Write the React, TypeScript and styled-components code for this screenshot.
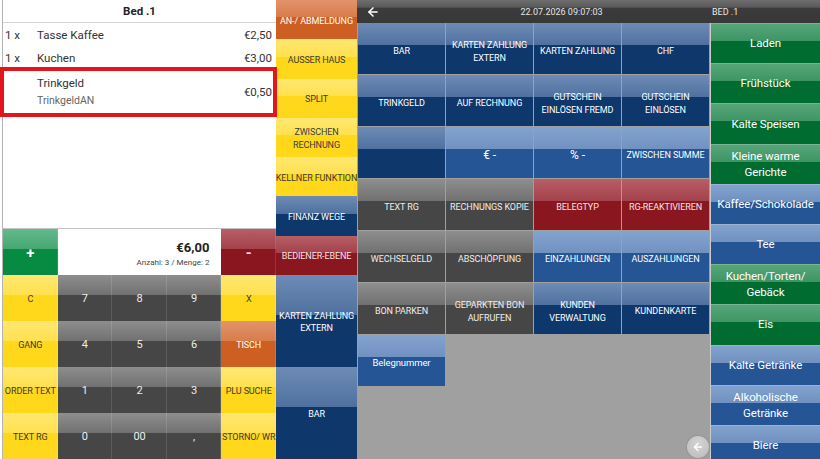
import styled, { createGlobalStyle, css } from "styled-components";
import { ArrowLeft } from "lucide-react";

const GlobalStyle = createGlobalStyle`
  html, body {
    margin: 0;
    padding: 0;
    background: #ffffff;
  }
  body {
    font-family: Roboto, "Noto Sans", "Liberation Sans", sans-serif;
  }
`;

type Tone =
  | "yellow"
  | "gray"
  | "green"
  | "red"
  | "orange"
  | "navy"
  | "blue"
  | "forest";

const tones: Record<Tone, { top: string; mid: string; low: string; ink: string }> = {
  yellow: { top: "#ffe872", mid: "#ffe04e", low: "#ffd81c", ink: "#3a3a3a" },
  gray: { top: "#8e8e8e", mid: "#707070", low: "#464646", ink: "#eeeeee" },
  green: { top: "#63b98c", mid: "#45a772", low: "#078b43", ink: "#ffffff" },
  red: { top: "#b75e67", mid: "#a3414b", low: "#8a1620", ink: "#f6e4e4" },
  orange: { top: "#e2936b", mid: "#d87c4b", low: "#cd5f22", ink: "#ffffff" },
  navy: { top: "#6d8bb5", mid: "#4f709f", low: "#0e376b", ink: "#ffffff" },
  blue: { top: "#84a3ce", mid: "#7091c1", low: "#255594", ink: "#ffffff" },
  forest: { top: "#58a67a", mid: "#3e9564", low: "#006c30", ink: "#ffffff" },
};

const gloss = (tone: Tone) => {
  const t = tones[tone];
  return css`
    background: linear-gradient(
      to bottom,
      ${t.top} 0%,
      ${t.mid} 44%,
      ${t.low} 44%,
      ${t.low} 100%
    );
    color: ${t.ink};
  `;
};

const Tile = styled.button<{ $tone: Tone; $size?: number; $bold?: boolean; $caps?: boolean }>`
  ${({ $tone }) => gloss($tone)}
  border: none;
  margin: 0;
  padding: 2px 0 0;
  min-width: 0;
  min-height: 0;
  display: flex;
  align-items: center;
  justify-content: center;
  text-align: center;
  font-family: inherit;
  font-size: ${({ $size }) => $size ?? 9}px;
  font-weight: ${({ $bold }) => ($bold ? 700 : 400)};
  text-transform: ${({ $caps }) => ($caps === false ? "none" : "uppercase")};
  letter-spacing: -0.1px;
  line-height: 1.35;
  white-space: pre;
  overflow: hidden;
  cursor: pointer;
`;

const Screen = styled.div`
  display: grid;
  grid-template-columns: 276px 81px 463px;
  grid-template-rows: 459px;
  width: 820px;
  height: 459px;
  overflow: hidden;
  background: #ffffff;
`;

/* ---------- left: bill + keypad ---------- */

const LeftPane = styled.div`
  display: flex;
  flex-direction: column;
  margin-left: 2px;
  border-left: 1px solid #b4b4b4;
  min-width: 0;
  min-height: 0;
`;

const Bill = styled.div`
  flex: 1;
  display: flex;
  flex-direction: column;
  background: #ffffff;
  border-bottom: 1px solid #c4c4c4;
  color: #333333;
  font-size: 11.5px;
`;

const BillHeader = styled.div`
  height: 22px;
  border-bottom: 1px solid #d6d6d6;
  display: flex;
  align-items: center;
  justify-content: center;
  font-weight: 700;
  color: #222222;
`;

const BillRow = styled.div<{ $active?: boolean }>`
  display: grid;
  grid-template-columns: 32px 1fr auto;
  align-items: center;
  height: 23px;
  padding: 0 4px 0 2px;

  ${({ $active }) =>
    $active &&
    css`
      position: relative;
      z-index: 1;
      height: auto;
      margin: -2px -1px 0 -3px;
      padding: 4px 1px 4px 1px;
      border: 4px solid #e3161c;
    `}
`;

const ItemName = styled.div`
  display: flex;
  flex-direction: column;
  line-height: 17px;
`;

const ItemNote = styled.span`
  font-size: 10.5px;
  color: #666666;
`;

const Keypad = styled.div`
  flex: 0 0 230px;
  display: grid;
  grid-template-columns: repeat(5, 1fr);
  grid-template-rows: repeat(5, 46px);

  & > ${Tile} {
    box-shadow: inset -1px 0 0 rgba(255, 255, 255, 0.12);
  }
`;

const Readout = styled.div`
  grid-column: span 3;
  background: #ffffff;
  display: flex;
  flex-direction: column;
  align-items: flex-end;
  justify-content: center;
  padding: 4px 12px 0 0;
  color: #222222;
`;

const Total = styled.div`
  font-size: 13px;
  font-weight: 700;
  line-height: 18px;
`;

const Counter = styled.div`
  font-size: 8px;
  color: #444444;
  line-height: 12px;
`;

/* ---------- middle: function column ---------- */

const FunctionColumn = styled.div`
  display: grid;
  grid-template-rows: repeat(7, 39.3px) repeat(2, 1fr);
  min-height: 0;
`;

/* ---------- right: payment grid + categories ---------- */

const RightPane = styled.div`
  display: flex;
  flex-direction: column;
  min-width: 0;
  min-height: 0;
  overflow: hidden;
`;

const TopBar = styled.div`
  flex: 0 0 23px;
  display: flex;
  align-items: center;
  background: linear-gradient(to bottom, #6e6e6e 0%, #585858 32%, #3b3b3b 34%, #383838 100%);
  color: #e6e6e6;
  font-size: 9px;
`;

const BackSlot = styled.div`
  width: 50px;
  padding-left: 9px;
  box-sizing: border-box;
  display: flex;
  align-items: center;
  color: #ffffff;
`;

const Clock = styled.div`
  flex: 1;
  text-align: center;
  padding-left: 6px;
`;

const TableName = styled.div`
  width: 108px;
  padding-left: 2px;
`;

const Body = styled.div`
  flex: 1;
  display: grid;
  grid-template-columns: 353px 1fr;
  grid-template-rows: minmax(0, 1fr);
  min-height: 0;
`;

const PayGrid = styled.div`
  position: relative;
  background: #a0a0a0;
  padding-left: 1px;
  display: grid;
  grid-template-columns: repeat(4, 87px);
  grid-auto-rows: 51px;
  gap: 1px;
  align-content: start;

  & > ${Tile} {
    padding-top: 6px;
  }
`;

const RoundBack = styled.button`
  position: absolute;
  right: 1px;
  bottom: 1px;
  width: 22px;
  height: 22px;
  border-radius: 50%;
  border: none;
  padding: 0;
  display: flex;
  align-items: center;
  justify-content: center;
  background: radial-gradient(circle at 50% 35%, #d4d4d4 0%, #c2c2c2 70%, #b4b4b4 100%);
  color: #ffffff;
  box-shadow: 0 0 2px rgba(0, 0, 0, 0.25);
`;

const Categories = styled.div`
  display: flex;
  flex-direction: column;
  overflow: hidden;
  min-height: 0;
  border-left: 1px solid #cacaca;

  & > ${Tile} {
    flex: 0 0 40.2px;
    line-height: 1.38;
    box-shadow: inset 0 1px 0 rgba(255, 255, 255, 0.18);
  }
`;

type Key = { label: string; tone: Tone; size?: number; bold?: boolean };

const keypadRows: Key[][] = [
  [{ label: "C", tone: "yellow" }, { label: "7", tone: "gray", size: 11 }, { label: "8", tone: "gray", size: 11 }, { label: "9", tone: "gray", size: 11 }, { label: "X", tone: "yellow" }],
  [{ label: "GANG", tone: "yellow" }, { label: "4", tone: "gray", size: 11 }, { label: "5", tone: "gray", size: 11 }, { label: "6", tone: "gray", size: 11 }, { label: "TISCH", tone: "orange" }],
  [{ label: "ORDER TEXT", tone: "yellow" }, { label: "1", tone: "gray", size: 11 }, { label: "2", tone: "gray", size: 11 }, { label: "3", tone: "gray", size: 11 }, { label: "PLU SUCHE", tone: "yellow" }],
  [{ label: "TEXT RG", tone: "yellow" }, { label: "0", tone: "gray", size: 11 }, { label: "00", tone: "gray", size: 11 }, { label: ",", tone: "gray", size: 11 }, { label: "STORNO/ WR", tone: "yellow" }],
];

const functions: Key[] = [
  { label: "AN-/ ABMELDUNG", tone: "orange" },
  { label: "AUSSER HAUS", tone: "yellow" },
  { label: "SPLIT", tone: "yellow" },
  { label: "ZWISCHEN\nRECHNUNG", tone: "yellow" },
  { label: "KELLNER FUNKTION", tone: "yellow" },
  { label: "FINANZ WEGE", tone: "navy" },
  { label: "BEDIENER-EBENE", tone: "red" },
  { label: "KARTEN ZAHLUNG\nEXTERN", tone: "navy" },
  { label: "BAR", tone: "navy" },
];

const payments: Key[] = [
  { label: "BAR", tone: "navy" },
  { label: "KARTEN ZAHLUNG\nEXTERN", tone: "navy" },
  { label: "KARTEN ZAHLUNG", tone: "navy" },
  { label: "CHF", tone: "navy" },
  { label: "TRINKGELD", tone: "navy" },
  { label: "AUF RECHNUNG", tone: "navy" },
  { label: "GUTSCHEIN\nEINLÖSEN FREMD", tone: "navy" },
  { label: "GUTSCHEIN\nEINLÖSEN", tone: "navy" },
  { label: "", tone: "navy" },
  { label: "€ -", tone: "blue", size: 12 },
  { label: "% -", tone: "blue", size: 12 },
  { label: "ZWISCHEN SUMME", tone: "blue" },
  { label: "TEXT RG", tone: "gray" },
  { label: "RECHNUNGS KOPIE", tone: "gray" },
  { label: "BELEGTYP", tone: "red" },
  { label: "RG-REAKTIVIEREN", tone: "red" },
  { label: "WECHSELGELD", tone: "gray" },
  { label: "ABSCHÖPFUNG", tone: "gray" },
  { label: "EINZAHLUNGEN", tone: "blue" },
  { label: "AUSZAHLUNGEN", tone: "blue" },
  { label: "BON PARKEN", tone: "gray" },
  { label: "GEPARKTEN BON\nAUFRUFEN", tone: "gray" },
  { label: "KUNDEN\nVERWALTUNG", tone: "navy" },
  { label: "KUNDENKARTE", tone: "navy" },
];

const categories: Key[] = [
  { label: "Laden", tone: "forest" },
  { label: "Frühstück", tone: "forest" },
  { label: "Kalte Speisen", tone: "forest" },
  { label: "Kleine warme\nGerichte", tone: "forest" },
  { label: "Kaffee/Schokolade", tone: "blue" },
  { label: "Tee", tone: "blue" },
  { label: "Kuchen/Torten/\nGebäck", tone: "forest" },
  { label: "Eis", tone: "forest" },
  { label: "Kalte Getränke", tone: "blue" },
  { label: "Alkoholische\nGetränke", tone: "blue" },
  { label: "Biere", tone: "blue" },
];

export default function App() {
  return (
    <>
      <GlobalStyle />
      <Screen>
        <LeftPane>
          <Bill>
            <BillHeader>Bed .1</BillHeader>
            <BillRow>
              <span>1 x</span>
              <span>Tasse Kaffee</span>
              <span>€2,50</span>
            </BillRow>
            <BillRow>
              <span>1 x</span>
              <span>Kuchen</span>
              <span>€3,00</span>
            </BillRow>
            <BillRow $active>
              <span />
              <ItemName>
                <span>Trinkgeld</span>
                <ItemNote>TrinkgeldAN</ItemNote>
              </ItemName>
              <span>€0,50</span>
            </BillRow>
          </Bill>

          <Keypad>
            <Tile $tone="green" $size={15} $bold>+</Tile>
            <Readout>
              <Total>€6,00</Total>
              <Counter>Anzahl: 3 / Menge: 2</Counter>
            </Readout>
            <Tile $tone="red" $size={15} $bold>-</Tile>
            {keypadRows.flat().map((k, i) => (
              <Tile key={i} $tone={k.tone} $size={k.size}>
                {k.label}
              </Tile>
            ))}
          </Keypad>
        </LeftPane>

        <FunctionColumn>
          {functions.map((f) => (
            <Tile key={f.label} $tone={f.tone}>
              {f.label}
            </Tile>
          ))}
        </FunctionColumn>

        <RightPane>
          <TopBar>
            <BackSlot>
              <ArrowLeft size={14} strokeWidth={2.6} />
            </BackSlot>
            <Clock>22.07.2026 09:07:03</Clock>
            <TableName>BED .1</TableName>
          </TopBar>
          <Body>
            <PayGrid>
              {payments.map((p, i) => (
                <Tile key={i} $tone={p.tone} $size={p.size}>
                  {p.label}
                </Tile>
              ))}
              <Tile $tone="blue" $caps={false} $size={9.5}>
                Belegnummer
              </Tile>
              <RoundBack aria-label="zurück">
                <ArrowLeft size={12} strokeWidth={2.6} />
              </RoundBack>
            </PayGrid>
            <Categories>
              {categories.map((c) => (
                <Tile key={c.label} $tone={c.tone} $size={11.5} $caps={false}>
                  {c.label}
                </Tile>
              ))}
            </Categories>
          </Body>
        </RightPane>
      </Screen>
    </>
  );
}
